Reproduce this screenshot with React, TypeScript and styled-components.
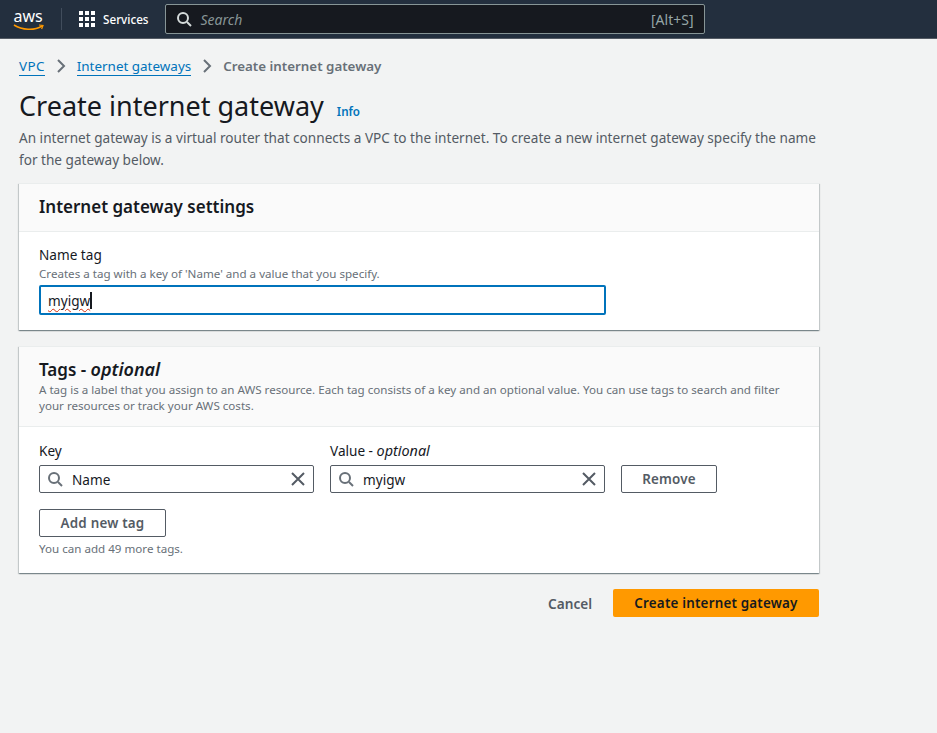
import React from "react";
import styled, { createGlobalStyle } from "styled-components";

const Global = createGlobalStyle`
  html, body { margin: 0; padding: 0; background: #f2f3f3; }
  body { font-family: "Noto Sans", "Liberation Sans", sans-serif; color: #16191f; height: 733px; overflow: hidden; }
  * { box-sizing: border-box; }
`;

const TopBar = styled.header`
  height: 39px;
  background: #232f3e;
  border-bottom: 1px solid #545b64;
  display: flex;
  align-items: center;
  padding-left: 13px;
`;
const Logo = styled.svg`
  width: 32px;
  height: 24px;
  display: block;
  overflow: visible;
`;
const Divider = styled.div`
  width: 1px;
  height: 22px;
  background: #414d5c;
  margin: 0 17px 0 16px;
`;
const ServicesBtn = styled.div`
  display: flex;
  align-items: center;
  gap: 8px;
  color: #fff;
  font-size: 11.7px;
  font-weight: 500;
  margin-right: 16px;
`;
const SearchBox = styled.div`
  width: 540px;
  height: 30px;
  background: #16191f;
  border: 1px solid #879596;
  border-radius: 2px;
  display: flex;
  align-items: center;
  padding: 0 10px;
  gap: 9px;
`;
const SearchText = styled.span`
  flex: 1;
  color: #879596;
  font-size: 14px;
  font-style: italic;
`;
const Shortcut = styled.span`
  color: #95a5a6;
  font-size: 14px;
`;
const Main = styled.main`
  width: 819px;
  padding-left: 19px;
`;
const Crumbs = styled.nav`
  display: flex;
  align-items: center;
  height: 20px;
  margin-top: 17px;
  font-size: 13.45px;
  line-height: 20px;
`;
const CrumbLink = styled.a`
  color: #0073bb;
  border-bottom: 1px solid #0073bb;
  line-height: 18px;
  &:first-child { letter-spacing: 0.35px; }
`;
const CrumbCurrent = styled.span`
  color: #687078;
  font-weight: 600;
  font-size: 13.35px;
`;
const CrumbSep = styled.svg`
  width: 16px;
  height: 16px;
  margin: 0 8px;
  color: #687078;
`;
const TitleRow = styled.div`
  display: flex;
  align-items: baseline;
  margin-top: 11px;
  height: 38px;
`;
const Title = styled.h1`
  margin: 0;
  font-size: 27px;
  font-weight: 400;
  line-height: 38px;
  color: #16191f;
`;
const InfoLink = styled.a`
  margin-left: 13px;
  font-size: 11.6px;
  font-weight: 600;
  color: #0073bb;
`;
const Description = styled.p`
  margin: 2px 0 12px;
  font-size: 13.6px;
  line-height: 22px;
  color: #545b64;
  width: 800px;
`;
const Card = styled.section`
  background: #fff;
  box-shadow: 0 1px 1px 0 rgba(0, 28, 36, 0.3), 1px 1px 1px 0 rgba(0, 28, 36, 0.15), -1px 1px 1px 0 rgba(0, 28, 36, 0.15);
  border-top: 1px solid #eaeded;
  margin-bottom: 16px;
`;
const CardHeader = styled.div<{ $h: number; $top: number }>`
  height: ${(p) => p.$h}px;
  background: #fafafa;
  border-bottom: 1px solid #eaeded;
  padding: ${(p) => p.$top}px 20px 0;
`;
const CardTitle = styled.h2`
  margin: 0;
  font-size: 17px;
  font-weight: 600;
  line-height: 24px;
  color: #16191f;
  em { font-style: italic; font-weight: 600; font-size: 18px; }
`;
const CardDesc = styled.p`
  margin: 0;
  font-size: 11.6px;
  line-height: 16px;
  color: #687078;
`;
const CardBody = styled.div<{ $top: number; $bottom: number }>`
  padding: ${(p) => p.$top}px 20px ${(p) => p.$bottom}px;
`;
const Label = styled.div`
  font-size: 13.6px;
  line-height: 20px;
  color: #16191f;
  em { font-style: italic; font-size: 14.4px; }
`;
const Hint = styled.div`
  font-size: 11.6px;
  line-height: 14px;
  color: #687078;
  margin-top: 2px;
`;
const NameInput = styled.div`
  position: relative;
  width: 567px;
  height: 30px;
  margin-top: 4px;
  border: 2px solid #0073bb;
  border-radius: 2px;
  background: #fff;
  display: flex;
  align-items: center;
  padding-left: 7px;
  font-size: 13.6px;
`;
const Typed = styled.span`
  text-decoration: underline wavy #d13212 1px;
  text-underline-offset: 2px;
`;
const Caret = styled.span`
  width: 2px;
  height: 17px;
  background: #16191f;
`;
const TagRow = styled.div`
  display: flex;
  align-items: flex-end;
  gap: 16px;
`;
const TagField = styled.div`
  width: 275px;
`;
const SearchField = styled.div`
  height: 28px;
  margin-top: 4px;
  border: 1px solid #545b64;
  border-radius: 2px;
  display: flex;
  align-items: center;
  padding: 0 7px;
  gap: 9px;
  font-size: 13.6px;
  color: #16191f;
`;
const FieldText = styled.span`
  flex: 1;
`;
const FieldIcon = styled.svg<{ $color: string }>`
  width: 16px;
  height: 16px;
  flex: none;
  color: ${(p) => p.$color};
`;
const ClearIcon = styled.svg`
  width: 16px;
  height: 16px;
  flex: none;
  color: #545b64;
`;
const OutlineButton = styled.button<{ $w: number }>`
  width: ${(p) => p.$w}px;
  height: 28px;
  background: #fff;
  border: 1px solid #545b64;
  border-radius: 2px;
  font-family: inherit;
  font-size: 13.4px;
  font-weight: 600;
  color: #545b64;
  letter-spacing: 0.2px;
  padding: 0;
`;
const AddRow = styled.div`
  margin-top: 16px;
`;
const Footnote = styled(Hint)`
  margin-top: 5px;
`;
const Actions = styled.div`
  display: flex;
  justify-content: flex-end;
  align-items: center;
  gap: 21px;
  width: 800px;
`;
const Cancel = styled.span`
  font-size: 13.6px;
  font-weight: 600;
  color: #545b64;
`;
const Primary = styled.button`
  width: 206px;
  height: 28px;
  background: #ff9900;
  border: 0;
  border-radius: 2px;
  font-family: inherit;
  font-size: 13.4px;
  font-weight: 600;
  color: #16191f;
  letter-spacing: 0.2px;
  padding: 0;
`;

const Mag = ({ color = "#687078" }: { color?: string }) => (
  <FieldIcon $color={color} viewBox="0 0 16 16" fill="none" stroke="currentColor" strokeWidth="2">
    <circle cx="7" cy="7" r="5" />
    <path d="M11 11l4 4" />
  </FieldIcon>
);
const Clear = () => (
  <ClearIcon viewBox="0 0 16 16" fill="none" stroke="currentColor" strokeWidth="2">
    <path d="M2 2l12 12M14 2L2 14" />
  </ClearIcon>
);
const Sep = () => (
  <CrumbSep viewBox="0 0 16 16" fill="none" stroke="currentColor" strokeWidth="2">
    <path d="M5 2l6 6-6 6" />
  </CrumbSep>
);

export default function App() {
  return (
    <>
      <Global />
      <TopBar>
        <Logo viewBox="0 0 32 24">
          <text x="0.5" y="15" fontFamily="Noto Sans" fontSize="16" fill="#fff">aws</text>
          <path d="M1 18c8 5 20 6 28 1" fill="none" stroke="#ff9900" strokeWidth="1.6" />
          <path d="M26 18l4 0.4-1.4 3.6" fill="none" stroke="#ff9900" strokeWidth="1.2" />
        </Logo>
        <Divider />
        <ServicesBtn>
          <svg width="16" height="16" viewBox="0 0 16 16" fill="#fff">
            {[0, 6, 12].map((y) =>
              [0, 6, 12].map((x) => <rect key={`${x}-${y}`} x={x} y={y} width="4" height="4" />)
            )}
          </svg>
          Services
        </ServicesBtn>
        <SearchBox>
          <Mag color="#d5dbdb" />
          <SearchText>Search</SearchText>
          <Shortcut>[Alt+S]</Shortcut>
        </SearchBox>
      </TopBar>
      <Main>
        <Crumbs>
          <CrumbLink>VPC</CrumbLink>
          <Sep />
          <CrumbLink>Internet gateways</CrumbLink>
          <Sep />
          <CrumbCurrent>Create internet gateway</CrumbCurrent>
        </Crumbs>
        <TitleRow>
          <Title>Create internet gateway</Title>
          <InfoLink>Info</InfoLink>
        </TitleRow>
        <Description>
          An internet gateway is a virtual router that connects a VPC to the internet. To create a new internet gateway specify the name for the gateway below.
        </Description>
        <Card>
          <CardHeader $h={48} $top={11}>
            <CardTitle>Internet gateway settings</CardTitle>
          </CardHeader>
          <CardBody $top={13} $bottom={15}>
            <Label>Name tag</Label>
            <Hint>Creates a tag with a key of 'Name' and a value that you specify.</Hint>
            <NameInput>
              <Typed>myigw</Typed>
              <Caret />
            </NameInput>
          </CardBody>
        </Card>
        <Card>
          <CardHeader $h={80} $top={10}>
            <CardTitle>Tags - <em>optional</em></CardTitle>
            <CardDesc>
              A tag is a label that you assign to an AWS resource. Each tag consists of a key and an optional value. You can use tags to search and filter your resources or track your AWS costs.
            </CardDesc>
          </CardHeader>
          <CardBody $top={14} $bottom={17}>
            <TagRow>
              <TagField>
                <Label>Key</Label>
                <SearchField>
                  <Mag />
                  <FieldText>Name</FieldText>
                  <Clear />
                </SearchField>
              </TagField>
              <TagField>
                <Label>Value - <em>optional</em></Label>
                <SearchField>
                  <Mag />
                  <FieldText>myigw</FieldText>
                  <Clear />
                </SearchField>
              </TagField>
              <OutlineButton $w={96}>Remove</OutlineButton>
            </TagRow>
            <AddRow>
              <OutlineButton $w={127}>Add new tag</OutlineButton>
            </AddRow>
            <Footnote>You can add 49 more tags.</Footnote>
          </CardBody>
        </Card>
        <Actions>
          <Cancel>Cancel</Cancel>
          <Primary>Create internet gateway</Primary>
        </Actions>
      </Main>
    </>
  );
}
